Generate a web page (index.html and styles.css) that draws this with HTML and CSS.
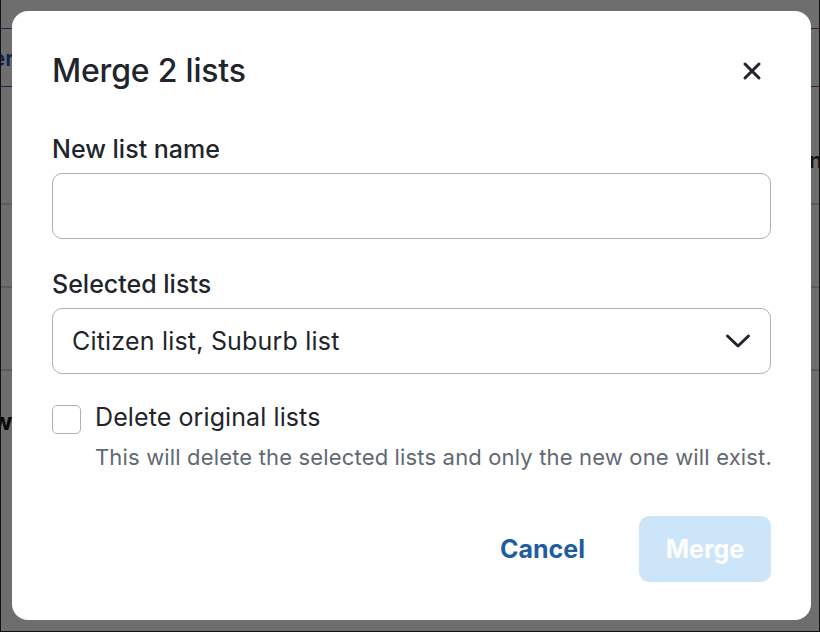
FILE: index.html
```html
<!DOCTYPE html>
<html lang="en">
<head>
    <meta charset="UTF-8">
    <meta name="viewport" content="width=device-width, initial-scale=1.0">
    <title>Merge lists</title>
    <link rel="stylesheet" href="styles.css">
</head>
<body>
    <div class="page">
        <nav class="tab-bar">
            <span class="tab active">Filter</span>
            <span class="tab rest"></span>
        </nav>
        <div class="table">
            <div class="table-head">
                <span>name</span>
            </div>
            <div class="table-row"></div>
            <div class="table-row"></div>
            <div class="table-row last">
                <strong>wi</strong>
            </div>
        </div>
    </div>

    <div class="overlay">
        <section class="dialog" role="dialog" aria-labelledby="dialogTitle">
            <header class="dialog-header">
                <h2 id="dialogTitle">Merge 2 lists</h2>
                <button type="button" class="close-btn" aria-label="Close">
                    <svg width="20" height="20" viewBox="0 0 20 20">
                        <path d="M3 3 L17 17 M17 3 L3 17" stroke="#1f252b" stroke-width="3" stroke-linecap="round"/>
                    </svg>
                </button>
            </header>

            <form id="mergeForm">
                <div class="form-group">
                    <label for="listName">New list name</label>
                    <input type="text" id="listName">
                </div>

                <div class="form-group">
                    <label for="selectedLists">Selected lists</label>
                    <div class="select-box" id="selectedLists">
                        <span>Citizen list, Suburb list</span>
                        <svg width="26" height="16" viewBox="0 0 26 16">
                            <path d="M2.5 3 L13 13 L23.5 3" fill="none" stroke="#1f252b" stroke-width="3" stroke-linecap="round" stroke-linejoin="round"/>
                        </svg>
                    </div>
                </div>

                <div class="check-group">
                    <input type="checkbox" id="deleteOriginal">
                    <div>
                        <label for="deleteOriginal">Delete original lists</label>
                        <p class="hint">This will delete the selected lists and only the new one will exist.</p>
                    </div>
                </div>

                <div class="actions">
                    <button type="button" class="cancel-btn">Cancel</button>
                    <button type="submit" class="merge-btn" disabled>Merge</button>
                </div>
            </form>
        </section>
    </div>
</body>
</html>
```

FILE: styles.css
```css
:root {
    --text: #1f252b;
    --muted: #5f6973;
    --border: #aab2ba;
    --blue: #1f5e9e;
    --blue-light: #cce5f9;
}

* {
    margin: 0;
    padding: 0;
    box-sizing: border-box;
    font-family: Inter, 'Noto Sans', sans-serif;
}

body {
    width: 820px;
    height: 632px;
    overflow: hidden;
    color: var(--text);
    background-color: white;
}

/* page behind the modal */
.page {
    height: 632px;
}

.tab-bar {
    display: flex;
    margin-top: 28px;
    height: 59px;
}

.tab {
    display: flex;
    align-items: center;
    border-top: 1px solid #3560c4;
    border-bottom: 1px solid #3560c4;
    color: #2350b8;
    font-size: 22px;
    font-weight: 600;
}

.tab.active {
    width: 14px;
    justify-content: flex-end;
    overflow: hidden;
}

.tab.rest {
    flex: 1;
    border-color: #c03030;
}

.table-head {
    display: flex;
    justify-content: flex-end;
    height: 118px;
    padding-top: 60px;
    border-bottom: 2px solid #d6d6d6;
    font-size: 22px;
    font-weight: 600;
    color: #333;
}

.table-head span {
    margin-right: -48px;
}

.table-row {
    height: 83px;
    border-bottom: 2px solid #d6d6d6;
}

.table-row.last {
    border-bottom: none;
    padding-top: 36px;
}

.table-row.last strong {
    display: block;
    margin-left: -8px;
    font-size: 24px;
    color: #111;
}

/* modal */
.overlay {
    position: fixed;
    inset: 0;
    background-color: rgba(0, 0, 0, 0.57);
    border: 1px solid #111;
    border-top: none;
    padding: 11px 0 0 11px;
}

.dialog {
    width: 799px;
    height: 609px;
    background-color: white;
    border-radius: 16px;
    padding: 40px 40px 0;
}

.dialog-header {
    display: flex;
    justify-content: space-between;
    align-items: center;
    height: 40px;
    margin-bottom: 43px;
}

.dialog-header h2 {
    font-size: 32px;
    font-weight: 500;
    line-height: 40px;
    letter-spacing: -0.2px;
}

.close-btn {
    border: none;
    background: none;
    width: 40px;
    height: 40px;
    display: flex;
    align-items: center;
    justify-content: center;
    margin-right: -1px;
    cursor: pointer;
}

.form-group {
    margin-bottom: 30px;
}

.form-group:nth-child(2) {
    margin-bottom: 28px;
}

label {
    display: block;
    font-size: 25px;
    font-weight: 500;
    line-height: 30px;
    margin-bottom: 9px;
}

input[type="text"],
.select-box {
    width: 100%;
    height: 66px;
    border: 1px solid var(--border);
    border-radius: 10px;
    font-size: 25px;
    padding: 0 19px;
}

.select-box {
    display: flex;
    align-items: center;
    justify-content: space-between;
    letter-spacing: 0.2px;
}

.check-group {
    display: flex;
    gap: 14px;
}

.check-group input {
    appearance: none;
    width: 29px;
    height: 29px;
    border: 1px solid var(--border);
    border-radius: 5px;
    margin-top: 3px;
    flex-shrink: 0;
}

.check-group label {
    font-weight: 400;
    margin-bottom: 11px;
    letter-spacing: 0.1px;
}

.hint {
    color: var(--muted);
    font-size: 22px;
    line-height: 28px;
    letter-spacing: 0.16px;
    white-space: nowrap;
}

.actions {
    display: flex;
    justify-content: flex-end;
    align-items: center;
    gap: 30px;
    margin-top: 45px;
}

.cancel-btn,
.merge-btn {
    border: none;
    background: none;
    font-size: 25px;
    font-weight: 700;
    height: 66px;
    border-radius: 10px;
    cursor: pointer;
}

.cancel-btn {
    color: var(--blue);
    padding: 0 24px;
}

.merge-btn {
    background-color: var(--blue-light);
    color: white;
    width: 132px;
}
```
